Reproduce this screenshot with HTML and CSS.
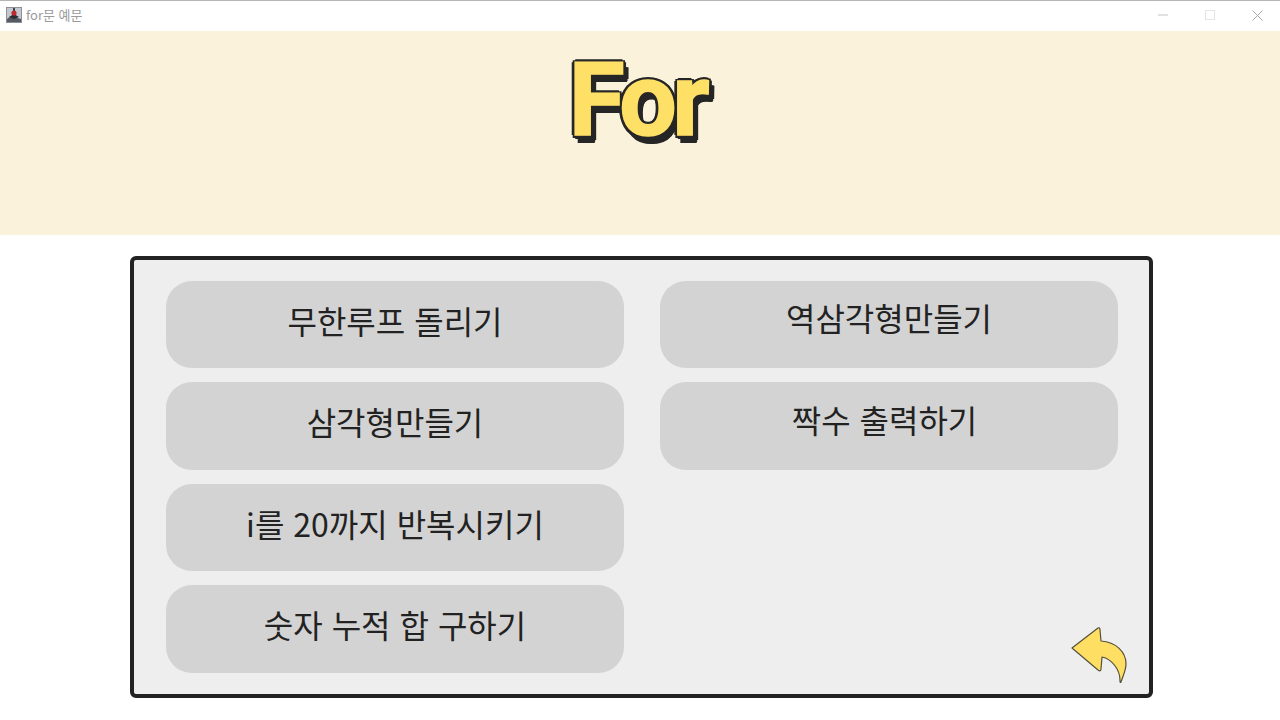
FILE: index.html
```html
<!DOCTYPE html>
<html lang="ko">
<head>
<meta charset="utf-8">
<title>for문 예문</title>
<link rel="stylesheet" href="styles.css">
</head>
<body>
<div class="titlebar">
  <div class="app">
    <svg class="app-icon" width="16" height="16" viewBox="0 0 16 16">
      <rect width="16" height="16" fill="#c4c8d0"/>
      <rect x=".5" y=".5" width="15" height="15" fill="none" stroke="#8b9098"/>
      <path d="M1 15V12L5 9 8 10 15 12V15Z" fill="#565a62"/>
      <path d="M3 10 8 7 13 10 8 12Z" fill="#2c2e34"/>
      <circle cx="8" cy="6" r="2.6" fill="#c02a30"/>
      <rect x="7" y="1" width="2" height="3" fill="#444"/>
    </svg>
    <span class="app-title">for문 예문</span>
  </div>
  <div class="controls">
    <svg width="10" height="10" viewBox="0 0 10 10"><path d="M0 5H10" stroke="#c4c4c4" fill="none"/></svg>
    <svg width="10" height="10" viewBox="0 0 10 10"><rect x=".5" y=".5" width="9" height="9" stroke="#e4e4e4" fill="none"/></svg>
    <svg width="11" height="11" viewBox="0 0 11 11"><path d="M.5 .5 10.500 10.500M10.500 .5 .5 10.500" stroke="#a8a8a8" fill="none"/></svg>
  </div>
</div>
<header class="hero"><h1 class="logo">For</h1></header>
<main class="panel">
  <div class="grid">
    <div class="col">
      <button class="btn">무한루프 돌리기</button>
      <button class="btn">삼각형만들기</button>
      <button class="btn">i를 20까지 반복시키기</button>
      <button class="btn">숫자 누적 합 구하기</button>
    </div>
    <div class="col">
      <button class="btn btn-high">역삼각형만들기</button>
      <button class="btn btn-high btn-space">짝수 출력하기</button>
    </div>
  </div>
  <svg class="back" width="60" height="60" viewBox="0 0 60 60">
    <path d="M4 24 30 4Q32 3 32 6L33 17C48 18 58 28 58 40 58 46 55 52 53 58 52 59 52 58 52 56 52 46 44 35 34 33L33 45Q33 48 30 46Z" fill="#ffdf63" stroke="#55503a" stroke-width="1.2" stroke-linejoin="round"/>
  </svg>
</main>
</body>
</html>
```
FILE: styles.css
```css
* { box-sizing: border-box; }
html, body { margin: 0; height: 720px; overflow: hidden; background: #fff; }
body { font-family: "Noto Sans CJK KR", "Noto Sans", sans-serif; display: flex; flex-direction: column; }

.titlebar {
  height: 31px;
  flex: none;
  border-top: 1px solid #b5b5b5;
  display: flex;
  justify-content: space-between;
  align-items: center;
  background: #fff;
}
.app { display: flex; align-items: center; gap: 4px; padding: 0 0 2px 6px; }
.app-icon { display: block; }
.app-title { font-size: 13px; line-height: 16px; color: #9a9a9a; }
.controls { display: flex; align-items: center; gap: 37px; padding: 0 17px 2px 0; }
.controls svg { display: block; }

.hero { height: 204px; flex: none; background: #fbf2db; display: flex; justify-content: center; }
.logo {
  margin: 9px 6px 0 0;
  height: 120px;
  font-family: Roboto, "Liberation Sans", sans-serif;
  font-size: 102px;
  line-height: 120px;
  font-weight: 700;
  letter-spacing: -4.5px;
  color: #ffe066;
  -webkit-text-stroke: 1.5px #ffe066;
  text-shadow:
    -3.500px 0 .5px #262626, 3.500px 0 .5px #262626,
    0 -3.500px .5px #262626, 0 3.500px .5px #262626,
    -2.500px -2.500px .5px #262626, 2.500px -2.500px .5px #262626,
    -2.500px 2.500px .5px #262626, 2.500px 2.500px .5px #262626,
    1px 2px .5px #262626, 2px 3px .5px #262626,
    3px 4.500px .5px #262626, 5px 4.500px .5px #262626,
    6px 4.500px .5px #262626, 2.500px 8px .5px #262626,
    5px 7px .5px #262626, 4.500px 8px .5px #262626;
}

.panel {
  position: relative;
  width: 1023px;
  height: 442px;
  margin: 21px 0 0 130px;
  padding: 20.8px 32px 21px 32px;
  background: #eeeeee;
  border: 4px solid #222222;
  border-radius: 6px;
}
.grid { display: grid; grid-template-columns: 458px 458px; column-gap: 36px; }
.col { display: flex; flex-direction: column; gap: 14px; }
.btn {
  height: 87.5px;
  padding: 0 0 10px;
  border: 0;
  border-radius: 26px;
  background: #d3d3d3;
  color: #222222;
  font-family: inherit;
  font-size: 32px;
  line-height: 1;
  font-weight: 400;
}
.btn-high { padding-bottom: 15px; }
.btn-space { padding-right: 9px; }
.back { position: absolute; right: 21px; bottom: 10px; display: block; }
```
